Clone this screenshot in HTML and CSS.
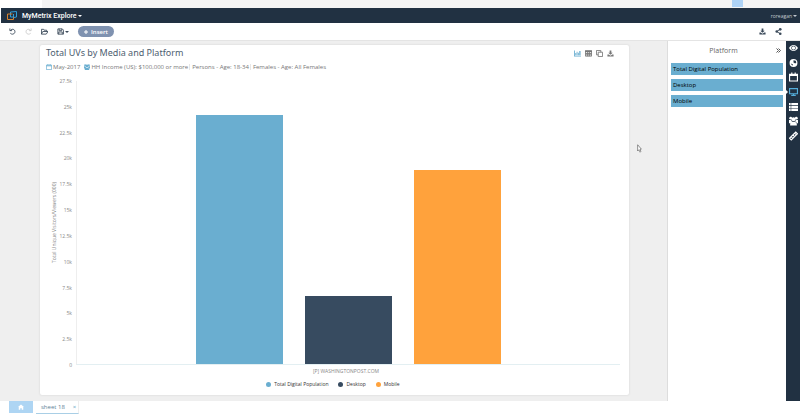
FILE: index.html
```html
<!DOCTYPE html>
<html lang="en">
<head>
    <meta charset="utf-8">
    <title>MyMetrix Explore</title>
    <link rel="stylesheet" href="styles.css">
</head>
<body>
    <svg class="sprite" aria-hidden="true">
        <symbol id="download" viewBox="0 0 16 16"><path d="M6 1h4v5h3L8 11 3 6h3zM1 10h3l4 3 4-3h3v5H1z"/></symbol>
        <symbol id="calendar" viewBox="0 0 16 16"><path class="line" d="M1 3h14v12H1zM1 5h14M5 0v4M11 0v4"/></symbol>
        <symbol id="people" viewBox="0 0 16 16"><circle cx="3" cy="3" r="2.500"/><circle cx="13" cy="3" r="2.500"/><circle cx="8" cy="5" r="3.500"/><path d="M0 6h4l1 3-2 3H0zM16 6h-4l-1 3 2 3h3zM2 16c0-5 1-7 3-7 2 1 4 1 6 0 2 0 3 2 3 7z"/></symbol>
    </svg>

    <div class="top-strip"><span class="strip-mark"></span></div>

    <header class="header">
        <svg class="logo" viewBox="0 0 20 18"><path class="logo-blue" d="M7 12V2l12-1v11l-5 1"/><path class="logo-orange" d="M11 6H1v11h12V10"/><path class="logo-blue" d="M7 12h6V6"/></svg>
        <button class="app-name">MyMetrix Explore<span class="caret"></span></button>
        <button class="user">roreagan<span class="caret"></span></button>
    </header>

    <nav class="toolbar">
        <button class="tool" aria-label="Undo"><svg viewBox="0 0 16 16"><path class="line" d="M2 1v5h5M3 6c5-7 13-1 10 5-2 4-7 4-10 1"/></svg></button>
        <button class="tool disabled" aria-label="Redo"><svg viewBox="0 0 16 16"><path class="line" d="M14 1v5H9M13 6C8-1 0 5 3 11c2 4 7 4 10 1"/></svg></button>
        <button class="tool" aria-label="Open"><svg viewBox="0 0 16 16"><path class="line" d="M1 14V3h5l1 2h6v3M1 14l3-6h12l-4 6z"/></svg></button>
        <button class="tool" aria-label="Save"><svg viewBox="0 0 16 16"><path class="line" d="M2 2h10l3 3v9H2zM5 2v4h6V2M4 14V9h8v5"/></svg><span class="caret"></span></button>
        <button class="insert-btn"><svg viewBox="0 0 8 8"><path d="M3 0h2v3h3v2H5v3H3V5H0V3h3z"/></svg>Insert</button>
        <button class="tool export" aria-label="Download"><svg><use href="#download"/></svg></button>
        <button class="tool" aria-label="Share"><svg viewBox="0 0 16 16"><path class="line" d="M12 3L4 8l8 5"/><circle cx="12" cy="3" r="3"/><circle cx="4" cy="8" r="3"/><circle cx="12" cy="13" r="3"/></svg></button>
    </nav>

    <main class="workspace">
        <section class="canvas">
            <article class="card">
                <div class="card-head">
                    <h1 class="card-title">Total UVs by Media and Platform</h1>
                    <div class="card-tools">
                        <button class="card-tool active" aria-label="Chart view"><svg viewBox="0 0 16 16"><path d="M0 1h2v12h14v2H0zM3 7h2v5H3zM6 4h2v8H6zM9 6h2v6H9zM12 2h3v10h-3z"/></svg></button>
                        <button class="card-tool" aria-label="Table view"><svg viewBox="0 0 16 16"><path d="M0 1h16v4H0z"/><path class="line" d="M1 2h14v12H1zM1 8h14M1 11h14M6 3v11M10 3v11"/></svg></button>
                        <button class="card-tool" aria-label="Copy"><svg viewBox="0 0 16 16"><path class="line" d="M5 5h10v10H5zM11 5V1H1v10h4"/></svg></button>
                        <button class="card-tool" aria-label="Download chart"><svg><use href="#download"/></svg></button>
                    </div>
                </div>
                <div class="filters">
                    <svg><use href="#calendar"/></svg>
                    <span class="filter date">May-2017</span>
                    <svg><use href="#people"/></svg>
                    <span class="filter">HH Income (US): $100,000 or more</span>
                    <span class="filter">Persons - Age: 18-34</span>
                    <span class="filter">Females - Age: All Females</span>
                </div>

                <div class="chart">
                    <div class="axis-title">Total Unique Visitors/Viewers (000)</div>
                    <div class="y-axis">
                        <span>27.5k</span>
                        <span>25k</span>
                        <span>22.5k</span>
                        <span>20k</span>
                        <span>17.5k</span>
                        <span>15k</span>
                        <span>12.5k</span>
                        <span>10k</span>
                        <span>7.5k</span>
                        <span>5k</span>
                        <span>2.5k</span>
                        <span>0</span>
                    </div>
                    <div class="plot">
                        <div class="bar total" style="height: 88%"></div>
                        <div class="bar desktop" style="height: 24%"></div>
                        <div class="bar mobile" style="height: 68.5%"></div>
                    </div>
                    <div class="x-axis">[P] WASHINGTONPOST.COM</div>
                </div>
                <ul class="legend">
                    <li><span class="dot total"></span>Total Digital Population</li>
                    <li><span class="dot desktop"></span>Desktop</li>
                    <li><span class="dot mobile"></span>Mobile</li>
                </ul>
            </article>
            <svg class="pointer" viewBox="0 0 8 14" aria-hidden="true"><path d="M1 1v10l2-2 2 4 1-1-1-4h2z" fill="#fff" stroke="#555"/></svg>
        </section>

        <aside class="panel">
            <div class="panel-head">
                <h2 class="panel-title">Platform</h2>
                <button class="collapse" aria-label="Collapse panel"><svg viewBox="0 0 10 10"><path class="line" d="M1 1l4 4-4 4M5 1l4 4-4 4"/></svg></button>
            </div>
            <button class="panel-item">Total Digital Population</button>
            <button class="panel-item">Desktop</button>
            <button class="panel-item">Mobile</button>
        </aside>

        <div class="side-bar">
            <nav class="side-nav">
                <button aria-label="View"><svg viewBox="0 0 16 16"><path fill-rule="evenodd" d="M0 8c4-7 12-7 16 0-4 7-12 7-16 0zM8 4a4 4 0 1 0 0 8 4 4 0 0 0 0-8z"/><circle cx="8" cy="8" r="3"/></svg></button>
                <button aria-label="Geography"><svg viewBox="0 0 16 16"><path fill-rule="evenodd" d="M8 1a7 7 0 1 0 0 14A7 7 0 0 0 8 1zM8 3l4 1 1 3-2 2-3-2zM3 9l4 1-1 3z"/></svg></button>
                <button aria-label="Time period"><svg><use href="#calendar"/></svg></button>
                <button class="current" aria-label="Platform"><svg viewBox="0 0 16 16"><path class="line" d="M1 2h14v9H1zM8 11v3M4 14h8"/></svg></button>
                <button aria-label="Measures"><svg viewBox="0 0 16 16"><path d="M0 1h3v4H0zM4 1h12v4H4zM0 6h3v4H0zM4 6h12v4H4zM0 11h3v4H0zM4 11h12v4H4z"/></svg></button>
                <button aria-label="Audience"><svg><use href="#people"/></svg></button>
                <button aria-label="Ruler"><svg viewBox="0 0 16 16"><path class="line" d="M1 12L12 1l3 3L4 15zM4 9l2 2M7 6l2 2M10 3l2 2"/></svg></button>
            </nav>
        </div>
    </main>

    <footer class="sheets">
        <button class="home-tab" aria-label="Home"><svg viewBox="0 0 16 16"><path d="M8 1l8 7h-2v7h-4v-4H6v4H2V8H0z"/></svg></button>
        <div class="sheet-tab">
            <a href="#">sheet 18</a>
            <button aria-label="Close sheet">×</button>
        </div>
    </footer>
</body>
</html>
```
FILE: styles.css
```css
* {
    box-sizing: border-box;
}

body {
    margin: 0;
    min-height: 100vh;
    display: flex;
    flex-direction: column;
    background: #fff;
    color: #555;
    font-family: "Open Sans", "Noto Sans", sans-serif;
    font-size: 6px;
}

button {
    display: flex;
    align-items: center;
    padding: 0;
    border: none;
    background: none;
    color: inherit;
    font: inherit;
    cursor: pointer;
}

svg {
    display: block;
    width: 8px;
    height: 8px;
    fill: currentColor;
    flex: none;
}

.line {
    fill: none;
    stroke: currentColor;
    stroke-width: 2;
}

.sprite {
    position: absolute;
    width: 0;
    height: 0;
}

.caret {
    margin-left: 1px;
    border: 2px solid transparent;
    border-top-color: currentColor;
    border-bottom: none;
}

/* header */
.top-strip {
    display: flex;
    justify-content: flex-end;
    height: 8px;
    margin-left: 42px;
    padding-right: 57px;
    background: #f4f4f4;
}

.strip-mark {
    width: 11px;
    height: 7px;
    background: #aed3f6;
}

.header {
    display: flex;
    align-items: center;
    height: 15px;
    margin-left: 1px;
    padding: 0 3px 0 6px;
    background: #213142;
    color: #fff;
}

.logo {
    width: 10px;
    height: 9px;
    margin-right: 5px;
    fill: none;
    stroke-width: 2;
}

.logo-blue {
    stroke: #2f9fd8;
}

.logo-orange {
    stroke: #d5812f;
}

.app-name {
    font-family: Roboto, sans-serif;
    font-size: 7px;
    font-weight: 500;
}

.user {
    margin-left: auto;
    color: #c3cad1;
    font-size: 5px;
}

/* toolbar */
.toolbar {
    display: flex;
    align-items: center;
    height: 18px;
    padding: 0 18px 0 9px;
    gap: 9px;
    border-bottom: 1px solid #e4e4e4;
}

.tool {
    color: #3b4a5a;
}

.tool svg {
    width: 7px;
    height: 7px;
}

.tool.disabled {
    color: #ccc;
}

.insert-btn {
    gap: 3px;
    height: 11px;
    padding: 0 6px;
    border-radius: 6px;
    background: #7f92b0;
    color: #fff;
    font-weight: 600;
}

.insert-btn svg {
    width: 4px;
    height: 4px;
}

.export {
    margin-left: auto;
}

/* workspace */
.workspace {
    flex: 1;
    display: flex;
    background: #efefef;
}

.canvas {
    position: relative;
    flex: 1;
    display: flex;
    padding: 4px 38px 6px 40px;
}

.card {
    flex: 1;
    display: flex;
    flex-direction: column;
    padding: 2px 9px 7px 6px;
    background: #fff;
    border-radius: 2px;
    box-shadow: 0 0 2px #ccc;
}

.card-head {
    display: flex;
    align-items: center;
    justify-content: space-between;
    height: 12px;
    padding-right: 6px;
}

.card-title {
    margin: 0;
    color: #4d6070;
    font-family: "Noto Sans", "Open Sans", sans-serif;
    font-size: 9px;
    font-weight: 400;
    line-height: 12px;
}

.card-tools {
    display: flex;
    gap: 4px;
}

.card-tool {
    color: #777;
}

.card-tool svg {
    width: 7px;
    height: 7px;
}

.card-tool.active {
    color: #6aaed0;
}

.filters {
    display: flex;
    align-items: center;
    height: 16px;
    color: #777;
}

.filters svg {
    width: 6px;
    height: 6px;
    margin-right: 1px;
    color: #6aaed0;
}

.filter {
    line-height: 6px;
}

.filter.date {
    margin-right: 4px;
}

.filter + .filter {
    margin-left: 1px;
    padding-left: 2px;
    border-left: 1px solid #e6e6e6;
}

.chart {
    flex: 1;
    display: grid;
    grid-template-columns: 12px 14px 1fr;
    grid-template-rows: 1fr 12px;
    margin-top: 6px;
    color: #888;
    font-size: 5px;
}

.axis-title {
    align-self: center;
    justify-self: end;
    writing-mode: vertical-rl;
    transform: rotate(180deg);
    line-height: 7px;
}

.y-axis {
    display: flex;
    flex-direction: column;
    justify-content: space-between;
    margin: -3px 0;
    text-align: right;
}

.y-axis span {
    line-height: 6px;
}

.plot {
    display: flex;
    align-items: flex-end;
    justify-content: center;
    gap: 4%;
    margin-left: 4px;
    border-left: 1px solid #eee;
    border-bottom: 1px solid #e3eff2;
}

.bar {
    width: 16%;
}

.total {
    background: #6aaed0;
}

.desktop {
    background: #374b60;
}

.mobile {
    background: #ffa23c;
}

.x-axis {
    grid-column: 3;
    text-align: center;
    line-height: 12px;
}

.legend {
    display: flex;
    justify-content: center;
    gap: 10px;
    margin: 4px 0 0;
    padding: 0;
    list-style: none;
    color: #333;
    font-size: 5px;
    line-height: 7px;
}

.legend li {
    display: flex;
    align-items: center;
    gap: 3px;
}

.dot {
    width: 5px;
    height: 5px;
    border-radius: 50%;
}

.pointer {
    position: absolute;
    top: 103px;
    right: 25px;
    width: 5px;
    height: 9px;
}

/* platform panel */
.panel {
    display: flex;
    flex-direction: column;
    gap: 4px;
    width: 119px;
    padding: 0 3px;
    border-left: 1px solid #ddd;
    background: #fff;
}

.panel-head {
    display: flex;
    align-items: center;
    height: 18px;
}

.panel-title {
    flex: 1;
    margin: 0;
    color: #666;
    font-size: 7px;
    font-weight: 400;
    text-align: center;
}

.collapse {
    margin-right: 2px;
    color: #555;
}

.collapse svg {
    width: 5px;
    height: 5px;
}

.panel-item {
    height: 12px;
    padding: 0 2px;
    background: #6aaed0;
    color: #000;
}

.side-bar {
    width: 14px;
    padding: 2px 0 0 3px;
    background: #213142;
    color: #fff;
}

.side-nav {
    display: flex;
    flex-direction: column;
    justify-content: space-between;
    height: 98px;
}

.side-nav svg {
    width: 9px;
    height: 10px;
}

.side-nav .current {
    position: relative;
    color: #55aedb;
}

.side-nav .current::before {
    content: "";
    position: absolute;
    left: -3px;
    border: 2px solid transparent;
    border-left-color: #fff;
    border-right: none;
}

/* sheet tabs */
.sheets {
    display: flex;
    gap: 3px;
    height: 15px;
    padding: 0 9px;
}

.home-tab {
    justify-content: center;
    width: 24px;
    height: 12px;
    background: #aed5f3;
    color: #fff;
}

.home-tab svg {
    width: 6px;
    height: 6px;
}

.sheet-tab {
    display: flex;
    align-items: center;
    gap: 8px;
    height: 13px;
    padding: 0 2px 0 5px;
    border-right: 1px solid #eee;
    border-bottom: 1px solid #a9cfe6;
}

.sheet-tab a {
    color: #5c8298;
    text-decoration: none;
}

.sheet-tab button {
    color: #5c9fc4;
}
```
